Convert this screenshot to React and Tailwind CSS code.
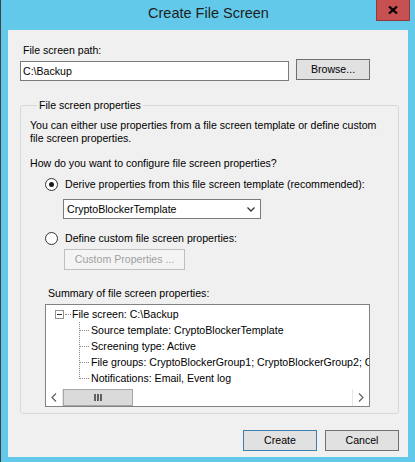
import React from "react";

const font = { fontFamily: '"Liberation Sans", Arial, sans-serif' };

const Radio = ({ checked }) => (
  <span className="w-[13px] h-[13px] rounded-full border border-[#333] bg-white flex items-center justify-center shrink-0">
    {checked && <span className="w-[5px] h-[5px] rounded-full bg-[#1a1a1a]" />}
  </span>
);

const Chevron = ({ dir }) => (
  <svg width="6" height="9" viewBox="0 0 6 9" className="text-[#606060]">
    {dir === "left" ? (
      <polyline points="5,0.5 1,4.5 5,8.5" fill="none" stroke="currentColor" strokeWidth="1.2" />
    ) : (
      <polyline points="1,0.5 5,4.5 1,8.5" fill="none" stroke="currentColor" strokeWidth="1.2" />
    )}
  </svg>
);

const treeChildren = [
  "Source template: CryptoBlockerTemplate",
  "Screening type: Active",
  "File groups: CryptoBlockerGroup1; CryptoBlockerGroup2; CryptoBlockerGroup3",
  "Notifications: Email, Event log",
];

export default function App() {
  return (
    <div className="w-[415px] h-[462px] bg-[#63c9ea] relative overflow-hidden text-[10.6px] text-black" style={font}>
      <div className="absolute left-0 top-0 bottom-0 w-[1px] bg-[#3c4348]" />

      {/* title bar */}
      <div className="h-[30px] flex items-center justify-center pb-[2px]">
        <span className="text-[14.5px] text-[#1e1e1e] ml-[2px]">Create File Screen</span>
      </div>
      <div className="absolute top-0 left-[376px] w-[34px] h-[21px] bg-[#c75050] border border-t-0 border-[#8f3b3b] flex items-center justify-center">
        <svg width="10" height="8" viewBox="0 0 10 8">
          <line x1="1" y1="0.5" x2="9" y2="7.5" stroke="#000" strokeWidth="2.2" />
          <line x1="9" y1="0.5" x2="1" y2="7.5" stroke="#000" strokeWidth="2.2" />
        </svg>
      </div>

      {/* client area */}
      <div className="ml-[8px] w-[400px] h-[427px] bg-[#f0f0f0] flex flex-col">
        <div className="ml-[15px] mt-[14px] leading-[13px]">File screen path:</div>
        <div className="flex ml-[12px] mt-[2px]">
          <div className="w-[269px] h-[20px] mt-[2px] bg-white border border-[#7a7a7a] flex items-center pl-[2px] leading-[13px]">
            C:\Backup
          </div>
          <div className="ml-[7px] w-[74px] h-[21px] bg-[#e1e1e1] border border-[#707070] flex items-center justify-center leading-[13px]">
            Browse...
          </div>
        </div>

        <fieldset className="ml-[12px] mt-[17px] w-[379px] border border-[#d5d9dc] rounded-[3px] pl-[9px] pb-[6px]">
          <legend className="ml-[7px] px-[2px] leading-[14px]">File screen properties</legend>
          <div className="mt-[7px] leading-[13px] whitespace-nowrap">
            You can either use properties from a file screen template or define custom
            <br />
            file screen properties.
          </div>
          <div className="mt-[12px] leading-[13px]">How do you want to configure file screen properties?</div>

          <div className="mt-[7px] ml-[15px] h-[14px] flex items-center gap-[7px] leading-[13px]">
            <Radio checked />
            <span>Derive properties from this file screen template (recommended):</span>
          </div>
          <div className="mt-[8px] ml-[33px] w-[198px] h-[20px] bg-white border border-[#7a7a7a] flex items-center justify-between pl-[3px] pr-[5px] leading-[13px]">
            <span>CryptoBlockerTemplate</span>
            <svg width="8" height="5" viewBox="0 0 8 5">
              <polyline points="0.5,0.5 4,4 7.5,0.5" fill="none" stroke="#333" strokeWidth="1.3" />
            </svg>
          </div>

          <div className="mt-[12px] ml-[15px] h-[14px] flex items-center gap-[7px] leading-[13px]">
            <Radio />
            <span>Define custom file screen properties:</span>
          </div>
          <div className="mt-[4px] ml-[34px] w-[121px] h-[21px] bg-[#f4f4f4] border border-[#bfbfbf] flex items-center justify-center text-[#a0a0a0] leading-[13px]">
            Custom Properties ...
          </div>

          <div className="mt-[17px] ml-[18px] leading-[13px]">Summary of file screen properties:</div>
          <div className="mt-[4px] ml-[15px] w-[325px] h-[103px] bg-white border border-[#828282] flex flex-col">
            <div className="flex-1 overflow-hidden pt-[1px] relative">
              <div className="h-[16px] flex items-center">
                <span className="ml-[9px] w-[9px] h-[9px] border border-[#919191] flex items-center justify-center shrink-0">
                  <span className="w-[5px] h-[1px] bg-[#333]" />
                </span>
                <span className="w-[6px] border-t border-dotted border-[#8a8a8a] ml-[1px]" />
                <span className="ml-[1px] leading-[13px] whitespace-nowrap">File screen: C:\Backup</span>
              </div>
              <div className="ml-[33px] border-l border-dotted border-[#8a8a8a] h-[57px] absolute top-[17px]" />
              {treeChildren.map((t) => (
                <div key={t} className="h-[16px] flex items-center">
                  <span className="ml-[34px] w-[9px] border-t border-dotted border-[#8a8a8a] shrink-0" />
                  <span className="ml-[2px] leading-[13px] whitespace-nowrap">{t}</span>
                </div>
              ))}
            </div>
            <div className="h-[17px] flex bg-white shrink-0">
              <div className="w-[17px] h-full flex items-center justify-center border-r border-[#e6e6e6]">
                <Chevron dir="left" />
              </div>
              <div className="w-[70px] h-full bg-[#dadada] border border-[#a6a6a6] flex items-center justify-center gap-[1px]">
                <span className="w-[2px] h-[7px] bg-[#606060]" />
                <span className="w-[2px] h-[7px] bg-[#606060]" />
                <span className="w-[2px] h-[7px] bg-[#606060]" />
              </div>
              <div className="flex-1" />
              <div className="w-[17px] h-full flex items-center justify-center border-l border-[#e6e6e6]">
                <Chevron dir="right" />
              </div>
            </div>
          </div>
        </fieldset>

        <div className="flex justify-end gap-[8px] mr-[9px] mt-[16px]">
          <div className="w-[74px] h-[21px] bg-[#e1e1e1] border border-[#3c7fb1] flex items-center justify-center leading-[13px]">
            Create
          </div>
          <div className="w-[74px] h-[21px] bg-[#e1e1e1] border border-[#707070] flex items-center justify-center leading-[13px]">
            Cancel
          </div>
        </div>
      </div>
    </div>
  );
}
